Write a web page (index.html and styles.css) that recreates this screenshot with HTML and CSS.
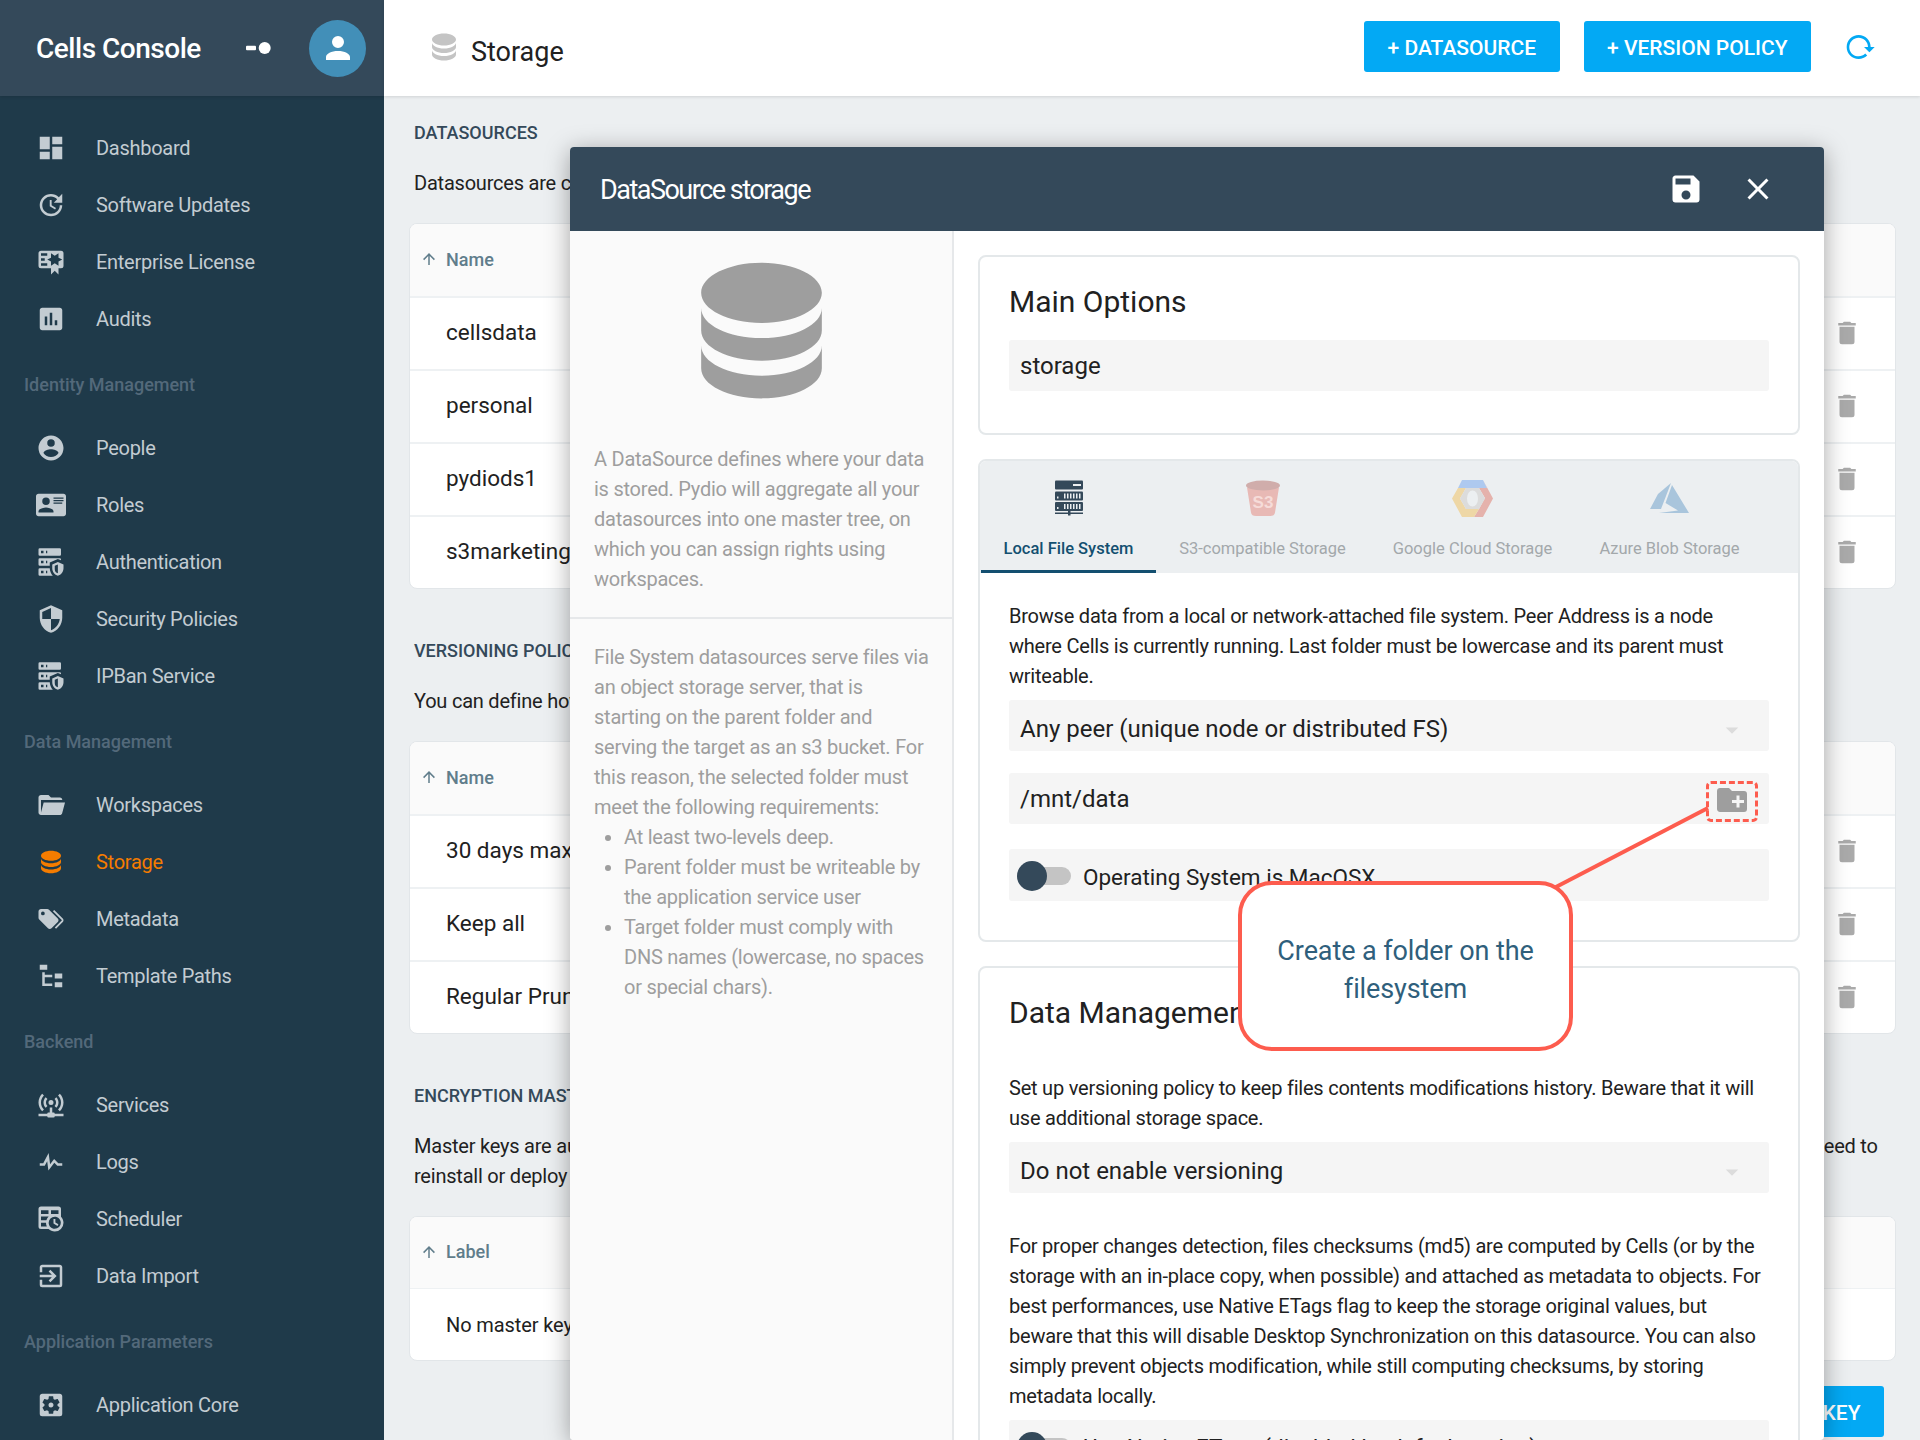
FILE: index.html
```html
<!DOCTYPE html>
<html lang="en">
<head>
<meta charset="utf-8">
<title>Cells Console - Storage</title>
<link rel="stylesheet" href="styles.css">
</head>
<body>
<svg class="sprite" xmlns="http://www.w3.org/2000/svg">
  <symbol id="i-dashboard" viewBox="0 0 24 24"><path d="M13,3V9H21V3M13,21H21V11H13M3,21H11V15H3M3,13H11V3H3V13Z"/></symbol>
  <symbol id="i-update" viewBox="0 0 24 24"><path d="M21,10.12H14.22L16.96,7.3C14.23,4.6 9.81,4.5 7.08,7.2C4.35,9.91 4.35,14.28 7.08,17C9.81,19.7 14.23,19.7 16.96,17C18.32,15.65 19,14.08 19,12.1H21C21,14.08 20.12,16.65 18.36,18.39C14.85,21.87 9.15,21.87 5.64,18.39C2.14,14.92 2.11,9.28 5.62,5.81C9.13,2.34 14.76,2.34 18.27,5.81L21,3V10.12M12.5,8V12.25L16,14.33L15.28,15.54L11,13V8H12.5Z"/></symbol>
  <symbol id="i-cert" viewBox="0 0 24 24"><path d="M4,3C2.89,3 2,3.89 2,5V15A2,2 0 0,0 4,17H12V22L15,19L18,22V17H20A2,2 0 0,0 22,15V8L22,6V5A2,2 0 0,0 20,3H16V3H4M12,5L15,7L18,5V8.5L21,10L18,11.5V15L15,13L12,15V11.5L9,10L12,8.5V5M4,5H9V7H4V5M4,9H7V11H4V9M4,13H9V15H4V13Z"/></symbol>
  <symbol id="i-chart" viewBox="0 0 24 24"><path d="M19,3H5C3.9,3 3,3.9 3,5V19C3,20.1 3.9,21 5,21H19C20.1,21 21,20.1 21,19V5C21,3.9 20.1,3 19,3M9,17H7V10H9V17M13,17H11V7H13V17M17,17H15V13H17V17Z"/></symbol>
  <symbol id="i-people" viewBox="0 0 24 24"><path d="M12,19.2C9.5,19.2 7.29,17.92 6,16C6.03,14 10,12.9 12,12.9C14,12.9 17.97,14 18,16C16.71,17.92 14.5,19.2 12,19.2M12,5A3,3 0 0,1 15,8A3,3 0 0,1 12,11A3,3 0 0,1 9,8A3,3 0 0,1 12,5M12,2A10,10 0 0,0 2,12A10,10 0 0,0 12,22A10,10 0 0,0 22,12C22,6.47 17.5,2 12,2Z"/></symbol>
  <symbol id="i-roles" viewBox="0 0 24 24"><path d="M2,3H22C23.05,3 24,3.95 24,5V19C24,20.05 23.05,21 22,21H2C0.95,21 0,20.05 0,19V5C0,3.95 0.95,3 2,3M14,6V7H22V6H14M14,8V9H21.5L22,9V8H14M14,10V11H21V10H14M8,13.91C6,13.91 2,15 2,17V18H14V17C14,15 10,13.91 8,13.91M8,6A3,3 0 0,0 5,9A3,3 0 0,0 8,12A3,3 0 0,0 11,9A3,3 0 0,0 8,6Z"/></symbol>
  <symbol id="i-server-sec" viewBox="0 0 24 24"><path d="M3,1H19A1,1 0 0,1 20,2V6A1,1 0 0,1 19,7H3A1,1 0 0,1 2,6V2A1,1 0 0,1 3,1M3,9H19A1,1 0 0,1 20,10V10.67L17.5,9.56L11,12.44V15H3A1,1 0 0,1 2,14V10A1,1 0 0,1 3,9M3,17H11C11.06,19.25 12,21.4 13.46,23H3A1,1 0 0,1 2,22V18A1,1 0 0,1 3,17M8,5H9V3H8V5M8,13H9V11H8V13M8,21H9V19H8V21M4,3V5H6V3H4M4,11V13H6V11H4M4,19V21H6V19H4M17.5,12L22,14V17C22,19.78 20.08,22.37 17.5,23C14.92,22.37 13,19.78 13,17V14L17.5,12M17.5,13.94L15,15.06V17.72C15,19.26 16.07,20.7 17.5,21.06V13.94Z"/></symbol>
  <symbol id="i-shield" viewBox="0 0 24 24"><path d="M12,12H19C18.47,16.11 15.72,19.78 12,20.92V12H5V6.3L12,3.19M12,1L3,5V11C3,16.55 6.84,21.73 12,23C17.16,21.73 21,16.55 21,11V5L12,1Z"/></symbol>
  <symbol id="i-folder" viewBox="0 0 24 24"><path d="M19,20H4C2.89,20 2,19.1 2,18V6C2,4.89 2.89,4 4,4H10L12,6H19A2,2 0 0,1 21,8H21L4,8V18L6.14,10H23.21L20.93,18.5C20.7,19.37 19.92,20 19,20Z"/></symbol>
  <symbol id="i-db" viewBox="0 0 24 24"><path d="M12,3C7.58,3 4,4.79 4,7C4,9.21 7.58,11 12,11C16.42,11 20,9.21 20,7C20,4.79 16.42,3 12,3M4,9V12C4,14.21 7.58,16 12,16C16.42,16 20,14.21 20,12V9C20,11.21 16.42,13 12,13C7.58,13 4,11.21 4,9M4,14V17C4,19.21 7.58,21 12,21C16.42,21 20,19.21 20,17V14C20,16.21 16.42,18 12,18C7.58,18 4,16.21 4,14Z"/></symbol>
  <symbol id="i-tags" viewBox="0 0 24 24"><path d="M5.5,9A1.5,1.5 0 0,0 7,7.5A1.5,1.5 0 0,0 5.5,6A1.5,1.5 0 0,0 4,7.5A1.5,1.5 0 0,0 5.5,9M17.41,11.58C17.77,11.94 18,12.44 18,13C18,13.55 17.78,14.05 17.41,14.41L12.41,19.41C12.05,19.77 11.55,20 11,20C10.45,20 9.95,19.78 9.58,19.41L2.59,12.42C2.22,12.05 2,11.55 2,11V6C2,4.89 2.89,4 4,4H9C9.55,4 10.05,4.22 10.41,4.58L17.41,11.58M13.54,5.71L14.54,4.71L21.41,11.58C21.78,11.94 22,12.45 22,13C22,13.55 21.78,14.05 21.42,14.41L16.04,19.79L15.04,18.79L20.75,13L13.54,5.71Z"/></symbol>
  <symbol id="i-tree" viewBox="0 0 24 24"><path d="M3,3H9V7H3V3M15,10H21V14H15V10M15,17H21V21H15V17M13,13H7V18H13V20H7L5,20V9H7V11H13V13Z"/></symbol>
  <symbol id="i-network" viewBox="0 0 24 24"><path d="M4.93,2.93C3.12,4.74 2,7.24 2,10C2,12.76 3.12,15.26 4.93,17.07L6.34,15.66C4.89,14.22 4,12.22 4,10C4,7.79 4.89,5.78 6.34,4.34L4.93,2.93M19.07,2.93L17.66,4.34C19.11,5.78 20,7.79 20,10C20,12.22 19.11,14.22 17.66,15.66L19.07,17.07C20.88,15.26 22,12.76 22,10C22,7.24 20.88,4.74 19.07,2.93M7.76,5.76C6.67,6.85 6,8.35 6,10C6,11.65 6.67,13.15 7.76,14.24L9.17,12.83C8.45,12.11 8,11.11 8,10C8,8.89 8.45,7.89 9.17,7.17L7.76,5.76M16.24,5.76L14.83,7.17C15.55,7.89 16,8.89 16,10C16,11.11 15.55,12.11 14.83,12.83L16.24,14.24C17.33,13.15 18,11.65 18,10C18,8.35 17.33,6.85 16.24,5.76M12,8A2,2 0 0,0 10,10A2,2 0 0,0 12,12A2,2 0 0,0 14,10A2,2 0 0,0 12,8M11,14V18H10A1,1 0 0,0 9,19H2V21H9A1,1 0 0,0 10,22H14A1,1 0 0,0 15,21H22V19H15A1,1 0 0,0 14,18H13V14H11Z"/></symbol>
  <symbol id="i-pulse" viewBox="0 0 24 24"><path d="M3,13H5.79L10.1,4.79L11.28,13.75L14.5,9.66L17.83,13H21V15H17L14.67,12.67L9.92,18.73L8.94,11.31L7,15H3V13Z"/></symbol>
  <symbol id="i-timetable" viewBox="0 0 24 24"><path d="M14,12H15.5V14.82L17.94,16.23L17.19,17.53L14,15.69V12M4,2H18A2,2 0 0,1 20,4V10.1C21.24,11.36 22,13.09 22,15A7,7 0 0,1 15,22C13.09,22 11.36,21.24 10.1,20H4A2,2 0 0,1 2,18V4A2,2 0 0,1 4,2M4,15V18H8.67C8.24,17.09 8,16.07 8,15H4M4,8H10V5H4V8M18,8V5H12V8H18M4,13H8.29C8.63,11.85 9.26,10.82 10.1,10H4V13M15,10.15A4.85,4.85 0 0,0 10.15,15C10.15,17.68 12.32,19.85 15,19.85A4.85,4.85 0 0,0 19.85,15C19.85,12.32 17.68,10.15 15,10.15Z"/></symbol>
  <symbol id="i-import" viewBox="0 0 24 24"><path d="M10.09,15.59L11.5,17L16.5,12L11.5,7L10.09,8.41L12.67,11H3V13H12.67L10.09,15.59M19,3H5C3.89,3 3,3.9 3,5V9H5V5H19V19H5V15H3V19A2,2 0 0,0 5,21H19A2,2 0 0,0 21,19V5C21,3.9 20.1,3 19,3Z"/></symbol>
  <symbol id="i-settings" viewBox="0 0 24 24"><path d="M17.25,12C17.25,12.23 17.23,12.46 17.2,12.68L18.68,13.84C18.81,13.95 18.85,14.13 18.76,14.29L17.36,16.71C17.27,16.86 17.09,16.92 16.93,16.86L15.19,16.16C14.83,16.44 14.43,16.67 14,16.85L13.75,18.7C13.72,18.87 13.57,19 13.4,19H10.6C10.43,19 10.28,18.87 10.25,18.7L10,16.85C9.56,16.67 9.17,16.44 8.81,16.16L7.07,16.86C6.91,16.92 6.73,16.86 6.64,16.71L5.24,14.29C5.15,14.13 5.19,13.95 5.32,13.84L6.8,12.68C6.77,12.46 6.75,12.23 6.75,12C6.75,11.77 6.77,11.54 6.8,11.32L5.32,10.16C5.19,10.05 5.15,9.86 5.24,9.71L6.64,7.29C6.73,7.13 6.91,7.07 7.07,7.13L8.81,7.84C9.17,7.56 9.56,7.32 10,7.15L10.25,5.29C10.28,5.13 10.43,5 10.6,5H13.4C13.57,5 13.72,5.13 13.75,5.29L14,7.15C14.43,7.32 14.83,7.56 15.19,7.84L16.93,7.13C17.09,7.07 17.27,7.13 17.36,7.29L18.76,9.71C18.85,9.86 18.81,10.05 18.68,10.16L17.2,11.32C17.23,11.54 17.25,11.77 17.25,12M19,3H5C3.89,3 3,3.89 3,5V19A2,2 0 0,0 5,21H19A2,2 0 0,0 21,19V5C21,3.89 20.1,3 19,3M12,10C10.89,10 10,10.89 10,12A2,2 0 0,0 12,14C13.1,14 14,13.1 14,12C14,10.89 13.1,10 12,10Z"/></symbol>
  <symbol id="i-account" viewBox="0 0 24 24"><path d="M12,4A4,4 0 0,1 16,8A4,4 0 0,1 12,12A4,4 0 0,1 8,8A4,4 0 0,1 12,4M12,14C16.42,14 20,15.79 20,18V20H4V18C4,15.79 7.58,14 12,14Z"/></symbol>
  <symbol id="i-save" viewBox="0 0 24 24"><path d="M15,9H5V5H15M12,19A3,3 0 0,1 9,16A3,3 0 0,1 12,13A3,3 0 0,1 15,16A3,3 0 0,1 12,19M17,3H5C3.89,3 3,3.9 3,5V19A2,2 0 0,0 5,21H19A2,2 0 0,0 21,19V7L17,3Z"/></symbol>
  <symbol id="i-close" viewBox="0 0 24 24"><path d="M19,6.41L17.59,5L12,10.59L6.41,5L5,6.41L10.59,12L5,17.59L6.41,19L12,13.41L17.59,19L19,17.59L13.41,12L19,6.41Z"/></symbol>
  <symbol id="i-trash" viewBox="0 0 24 24"><path d="M19,4H15.5L14.5,3H9.5L8.5,4H5V6H19M6,19A2,2 0 0,0 8,21H16A2,2 0 0,0 18,19V7H6V19Z"/></symbol>
  <symbol id="i-reload" viewBox="0 0 24 24"><path d="M2 12C2 16.97 6.03 21 11 21C13.39 21 15.68 20.06 17.4 18.4L15.9 16.9C14.63 18.25 12.86 19 11 19C4.76 19 1.64 11.46 6.05 7.05C10.46 2.64 18 5.77 18 12H15L19 16H19.1L23 12H20C20 7.03 15.97 3 11 3C6.03 3 2 7.03 2 12Z"/></symbol>
  <symbol id="i-folder-plus" viewBox="0 0 24 24"><path d="M10,4L12,6H20A2,2 0 0,1 22,8V18A2,2 0 0,1 20,20H4C2.89,20 2,19.1 2,18V6C2,4.89 2.89,4 4,4H10M15,9V12H12V14H15V17H17V14H20V12H17V9H15Z"/></symbol>
  <symbol id="i-up" viewBox="0 0 24 24"><path d="M13,20H11V8L5.5,13.5L4.08,12.08L12,4.16L19.92,12.08L18.5,13.5L13,8V20Z"/></symbol>
  <symbol id="i-down" viewBox="0 0 24 24"><path d="M7,10L12,15L17,10H7Z"/></symbol>
</svg>

<div class="app">
  <aside class="sidebar">
    <header class="brand">
      <span class="brand-title">Cells Console</span>
      <svg class="brand-toggle" viewBox="0 0 25 12"><rect x="0" y="3.7" width="10" height="4.6" rx="1"/><circle cx="18.7" cy="6" r="6"/></svg>
      <span class="avatar"><svg class="icon-avatar"><use href="#i-account"/></svg></span>
    </header>
    <nav class="nav">
      <a class="nav-item"><svg class="nav-icon"><use href="#i-dashboard"/></svg>Dashboard</a>
      <a class="nav-item"><svg class="nav-icon"><use href="#i-update"/></svg>Software Updates</a>
      <a class="nav-item"><svg class="nav-icon"><use href="#i-cert"/></svg>Enterprise License</a>
      <a class="nav-item"><svg class="nav-icon"><use href="#i-chart"/></svg>Audits</a>
      <div class="nav-group">Identity Management</div>
      <a class="nav-item"><svg class="nav-icon"><use href="#i-people"/></svg>People</a>
      <a class="nav-item"><svg class="nav-icon"><use href="#i-roles"/></svg>Roles</a>
      <a class="nav-item"><svg class="nav-icon"><use href="#i-server-sec"/></svg>Authentication</a>
      <a class="nav-item"><svg class="nav-icon"><use href="#i-shield"/></svg>Security Policies</a>
      <a class="nav-item"><svg class="nav-icon"><use href="#i-server-sec"/></svg>IPBan Service</a>
      <div class="nav-group">Data Management</div>
      <a class="nav-item"><svg class="nav-icon"><use href="#i-folder"/></svg>Workspaces</a>
      <a class="nav-item is-active"><svg class="nav-icon"><use href="#i-db"/></svg>Storage</a>
      <a class="nav-item"><svg class="nav-icon"><use href="#i-tags"/></svg>Metadata</a>
      <a class="nav-item"><svg class="nav-icon"><use href="#i-tree"/></svg>Template Paths</a>
      <div class="nav-group">Backend</div>
      <a class="nav-item"><svg class="nav-icon"><use href="#i-network"/></svg>Services</a>
      <a class="nav-item"><svg class="nav-icon"><use href="#i-pulse"/></svg>Logs</a>
      <a class="nav-item"><svg class="nav-icon"><use href="#i-timetable"/></svg>Scheduler</a>
      <a class="nav-item"><svg class="nav-icon"><use href="#i-import"/></svg>Data Import</a>
      <div class="nav-group">Application Parameters</div>
      <a class="nav-item"><svg class="nav-icon"><use href="#i-settings"/></svg>Application Core</a>
    </nav>
  </aside>

  <main class="main">
    <header class="topbar">
      <svg class="top-icon"><use href="#i-db"/></svg>
      <h1 class="top-title">Storage</h1>
      <button class="btn">+ DATASOURCE</button>
      <button class="btn">+ VERSION POLICY</button>
      <svg class="top-reload"><use href="#i-reload"/></svg>
    </header>

    <div class="content">
      <section class="section">
        <h2 class="section-title">Datasources</h2>
        <p class="section-text">Datasources are configured to store your data on a local folder or a remote object storage.</p>
        <div class="card">
          <div class="card-head"><svg class="sort"><use href="#i-up"/></svg>Name</div>
          <div class="card-row">cellsdata<svg class="trash"><use href="#i-trash"/></svg></div>
          <div class="card-row">personal<svg class="trash"><use href="#i-trash"/></svg></div>
          <div class="card-row">pydiods1<svg class="trash"><use href="#i-trash"/></svg></div>
          <div class="card-row">s3marketing<svg class="trash"><use href="#i-trash"/></svg></div>
        </div>
      </section>

      <section class="section">
        <h2 class="section-title">Versioning Policies</h2>
        <p class="section-text">You can define how many versions of each file are kept on a datasource.</p>
        <div class="card">
          <div class="card-head"><svg class="sort"><use href="#i-up"/></svg>Name</div>
          <div class="card-row">30 days max<svg class="trash"><use href="#i-trash"/></svg></div>
          <div class="card-row">Keep all<svg class="trash"><use href="#i-trash"/></svg></div>
          <div class="card-row">Regular Pruning<svg class="trash"><use href="#i-trash"/></svg></div>
        </div>
      </section>

      <section class="section">
        <h2 class="section-title">Encryption Master Keys</h2>
        <p class="section-text section-text-wide">Master keys are automatically created and stored inside the application keyring. Export them and keep them in a very safe and very secure place, because you will need to<br>reinstall or deploy them on any other instance of the application.</p>
        <div class="card card-compact">
          <div class="card-head"><svg class="sort"><use href="#i-up"/></svg>Label</div>
          <div class="card-row">No master key</div>
        </div>
        <div class="section-actions"><button class="btn">+ MASTER KEY</button></div>
      </section>
    </div>
  </main>
</div>

<div class="modal">
  <header class="modal-head">
    <span class="modal-title">DataSource storage</span>
    <svg class="modal-action"><use href="#i-save"/></svg>
    <svg class="modal-action modal-close"><use href="#i-close"/></svg>
  </header>
  <div class="modal-body">
    <aside class="info">
      <div class="info-top">
        <svg class="info-icon"><use href="#i-db"/></svg>
        <p class="info-text">A DataSource defines where your data is stored. Pydio will aggregate all your datasources into one master tree, on which you can assign rights using workspaces.</p>
      </div>
      <div class="info-bottom">
        <p class="info-text">File System datasources serve files via an object storage server, that is starting on the parent folder and serving the target as an s3 bucket. For this reason, the selected folder must meet the following requirements:</p>
        <ul class="info-list">
          <li>At least two-levels deep.</li>
          <li>Parent folder must be writeable by the application service user</li>
          <li>Target folder must comply with DNS names (lowercase, no spaces or special chars).</li>
        </ul>
      </div>
    </aside>

    <div class="forms">
      <section class="panel panel-main">
        <h3 class="panel-title">Main Options</h3>
        <div class="field">storage</div>
      </section>

      <section class="panel panel-storage">
        <div class="tabs">
          <div class="tab is-active">
            <svg class="tab-icon" width="28" height="36" viewBox="0 0 28 36">
              <g fill="#34495a">
                <rect x="0" y="0" width="28" height="9" rx="1"/><rect x="0" y="11" width="28" height="9" rx="1"/><rect x="0" y="21.500" width="28" height="9" rx="1"/>
                <rect x="13" y="30" width="2.500" height="5"/><rect x="0" y="32" width="28" height="1.500"/>
              </g>
              <g fill="#eceff1">
                <rect x="18" y="3.500" width="8" height="2"/>
                <rect x="2" y="16" width="1.500" height="2"/><rect x="9" y="13" width="1.500" height="5"/><rect x="12" y="13" width="1.500" height="5"/><rect x="15" y="13" width="1.500" height="5"/><rect x="18" y="13" width="1.500" height="5"/><rect x="21" y="13" width="1.500" height="5"/><rect x="24" y="13" width="1.500" height="5"/>
                <rect x="2" y="26.500" width="1.500" height="2"/><rect x="9" y="23.500" width="1.500" height="5"/><rect x="12" y="23.500" width="1.500" height="5"/><rect x="15" y="23.500" width="1.500" height="5"/><rect x="18" y="23.500" width="1.500" height="5"/><rect x="21" y="23.500" width="1.500" height="5"/><rect x="24" y="23.500" width="1.500" height="5"/>
              </g>
            </svg>
            <span class="tab-label">Local File System</span>
          </div>
          <div class="tab">
            <svg class="tab-icon" width="34" height="36" viewBox="0 0 34 36">
              <path d="M1 7 L5 32 Q5.500 35.500 10 35.500 H24 Q28.500 35.500 29 32 L33 7 Z" fill="#e8b9b5"/>
              <ellipse cx="17" cy="5" rx="17" ry="5" fill="#d0adab"/>
              <text class="s3-text" x="17" y="27" text-anchor="middle">S3</text>
            </svg>
            <span class="tab-label">S3-compatible Storage</span>
          </div>
          <div class="tab">
            <svg class="tab-icon" width="41" height="37" viewBox="0 0 41 37">
              <polygon points="10,0 31,0 35,8 27,8 14,8 6,8" fill="#aec9ef"/>
              <polygon points="31,0 41,18.500 31,37 22,37 27,29 33,18 27,8 35,8" fill="#e5b2ac"/>
              <polygon points="0,18.500 6,8 9,8 14,8 8,18.500 14,29 22,29 27,29 22,37 10,37" fill="#eed7a6"/>
              <polygon points="14,8 27,8 33,18.500 27,29 14,29 8,18.500" fill="#dcdcdc"/>
              <ellipse cx="20.500" cy="18.500" rx="5.500" ry="8" fill="#eceff1"/>
            </svg>
            <span class="tab-label">Google Cloud Storage</span>
          </div>
          <div class="tab">
            <svg class="tab-icon" width="39" height="31" viewBox="0 0 39 31">
              <path d="M21 0 L8 11 L0 26 H11 Z" fill="#a9c5dc"/>
              <path d="M22 2 L15.500 20 L28 27.500 L9 30 H39 Z" fill="#a9c5dc"/>
            </svg>
            <span class="tab-label">Azure Blob Storage</span>
          </div>
        </div>
        <div class="panel-inner">
          <p class="panel-text panel-text-storage">Browse data from a local or network-attached file system. Peer Address is a node where Cells is currently running. Last folder must be lowercase and its parent must writeable.</p>
          <div class="field field-select">Any peer (unique node or distributed FS)<svg class="caret"><use href="#i-down"/></svg></div>
          <div class="field field-path">/mnt/data<svg class="folder-plus"><use href="#i-folder-plus"/></svg></div>
          <div class="field field-toggle"><span class="toggle"><span class="toggle-thumb"></span></span><span class="toggle-label">Operating System is MacOSX</span></div>
        </div>
      </section>

      <section class="panel panel-data">
        <h3 class="panel-title">Data Management</h3>
        <p class="panel-text panel-text-data">Set up versioning policy to keep files contents modifications history. Beware that it will use additional storage space.</p>
        <div class="field field-select">Do not enable versioning<svg class="caret"><use href="#i-down"/></svg></div>
        <p class="panel-text panel-text-etag">For proper changes detection, files checksums (md5) are computed by Cells (or by the storage with an in-place copy, when possible) and attached as metadata to objects. For best performances, use Native ETags flag to keep the storage original values, but beware that this will disable Desktop Synchronization on this datasource. You can also simply prevent objects modification, while still computing checksums, by storing metadata locally.</p>
        <div class="field field-toggle field-toggle-last"><span class="toggle"><span class="toggle-thumb"></span></span><span class="toggle-label">Use Native ETags (disabled by default option)</span></div>
      </section>
    </div>
  </div>
</div>

<svg class="callout-line" viewBox="0 0 160 90"><line x1="156" y1="4" x2="2" y2="84"/></svg>
<div class="callout-target"></div>
<div class="callout">Create a folder on the filesystem</div>
</body>
</html>
```

FILE: styles.css
```css
* { box-sizing: border-box; }
html, body { margin: 0; padding: 0; height: 1440px; overflow: hidden; }
body { font-family: Roboto, "Noto Sans", sans-serif; color: #212121; background: #eceff1; position: relative; }
h1, h2, h3, p, ul { margin: 0; padding: 0; font-weight: 400; }
.sprite { position: absolute; width: 0; height: 0; }
svg { fill: currentColor; display: block; flex: none; }

.app { display: flex; height: 1440px; }

/* Sidebar */
.sidebar { width: 384px; flex: none; background: #1f3a4a; color: #c3ccd2; height: 1440px; overflow: hidden; }
.brand { height: 96px; background: #34495a; display: flex; align-items: center; padding: 0 18px 0 36px; box-shadow: 0 1px 3px rgba(0,0,0,.12); }
.brand-title { font-size: 28px; font-weight: 500; color: #fff; letter-spacing: -.48px; }
.brand-toggle { width: 25px; height: 12px; fill: #fff; margin-left: auto; margin-right: 38px; }
.avatar { width: 57px; height: 57px; border-radius: 50%; background: #428fb8; display: flex; align-items: center; justify-content: center; color: #fff; }
.icon-avatar { width: 36px; height: 36px; }
.nav { padding-top: 23.500px; }
.nav-item { display: flex; align-items: center; height: 57px; font-size: 20px; letter-spacing: -.28px; padding-left: 36px; }
.nav-icon { width: 30px; height: 30px; margin-right: 30px; }
.nav-item.is-active { color: #f57c00; }
.nav-group { height: 72px; padding: 24px 0 0 24px; font-size: 18px; font-weight: 500; line-height: 25px; color: #53697a; }

/* Main */
.main { flex: 1; min-width: 0; display: flex; flex-direction: column; background: #eceff1; }
.topbar { height: 96px; flex: none; background: #fff; display: flex; align-items: center; padding: 0 44px 3px 42px; box-shadow: 0 1px 3px rgba(0,0,0,.12); position: relative; }
.top-icon { width: 36px; height: 36px; color: #c4c4c4; margin-top: 1px; }
.top-title { font-size: 27px; margin: 10px auto 0 9px; color: #212121; }
.btn { height: 51px; padding: 2px 23.500px 0; border: 0; border-radius: 3px; background: #03a9f4; color: #fff; font: 500 21px Roboto, sans-serif; margin-right: 24px; white-space: nowrap; }
.top-reload { width: 32px; height: 32px; color: #03a9f4; margin-left: 9px; }

.content { padding: 24px 24px 0 25px; }
.section { margin-bottom: 49px; }
.section-title { font-size: 18px; font-weight: 500; line-height: 26px; color: #34495a; text-transform: uppercase; padding-left: 5px; }
.section-text { font-size: 20px; line-height: 30px; letter-spacing: -.22px; margin-top: 22px; padding-left: 5px; color: #212121; }
.section-text-wide { white-space: nowrap; }
.card { margin-top: 25px; background: #fff; border: 1px solid #e2e6e9; border-radius: 8px; overflow: hidden; }
.card-head { height: 72px; display: flex; align-items: center; background: #fafafa; font-size: 18px; font-weight: 500; color: #607d8b; padding: 0 0 2px 10px; }
.sort { width: 18px; height: 18px; margin-right: 8px; }
.card-row { height: 73px; display: flex; align-items: center; justify-content: space-between; font-size: 22.500px; padding: 0 33px 3px 36px; border-top: 2px solid #eef1f3; }
.card-compact .card-head { height: 71px; }
.card-compact .card-row { height: 72px; border-top-width: 1px; font-size: 20px; letter-spacing: -.1px; padding-bottom: 0; }
.trash { width: 30px; height: 30px; color: #aaa; margin-top: 1px; }
.section-actions { display: flex; justify-content: flex-end; margin-top: 25px; padding-right: 12px; }
.section-actions .btn { margin-right: 0; }

/* Modal */
.modal { position: absolute; left: 570px; top: 147px; width: 1254px; height: 1293px; background: #fff; border-radius: 4px; overflow: hidden; box-shadow: 0 4px 24px rgba(0,0,0,.35); display: flex; flex-direction: column; }
.modal-head { height: 84px; flex: none; background: #34495a; color: #fff; display: flex; align-items: center; padding: 0 48px 0 30px; }
.modal-title { font-size: 27px; letter-spacing: -1.5px; margin: 2px auto 0 0; }
.modal-action { width: 36px; height: 36px; }
.modal-close { margin-left: 36px; }
.modal-body { flex: 1; display: flex; min-height: 0; }
.info { width: 384px; flex: none; background: #fafafa; border-right: 2px solid #e6e8ea; color: #9e9e9e; }
.info-top { padding: 9px 22px 23px 24px; border-bottom: 2px solid #e6e8ea; }
.info-icon { width: 181px; height: 181px; margin: 0 0 23px 76.500px; color: #9e9e9e; }
.info-text { font-size: 20px; line-height: 30px; letter-spacing: -.24px; }
.info-bottom { padding: 23px 18px 0 24px; }
.info-list { font-size: 20px; line-height: 30px; letter-spacing: -.24px; padding-left: 30px; }

.forms { flex: 1; min-width: 0; padding: 24px 24px 0 24px; }
.panel { border: 2px solid #e4e8ea; border-radius: 8px; margin-bottom: 24px; background: #fff; }
.panel-main { height: 180px; padding: 0 29px; }
.panel-title { font-size: 30px; line-height: 40px; color: #212121; }
.panel-main .panel-title { padding-top: 25px; height: 83px; }
.panel-text { font-size: 20px; line-height: 30px; letter-spacing: -.22px; color: #212121; }
.field { position: relative; height: 51px; background: #f5f5f5; border-radius: 3px; padding: 1px 11px 0; font-size: 24px; display: flex; align-items: center; color: #212121; }
.field-select { padding-top: 6px; }
.panel-storage { height: 483px; overflow: hidden; }
.tabs { display: flex; background: #eceff1; height: 112px; padding-left: 1px; }
.tab { height: 112px; padding: 18.500px 23px 0; display: flex; flex-direction: column; align-items: center; border-bottom: 3px solid transparent; white-space: nowrap; color: #a3a8ab; }
.tab.is-active { border-bottom-color: #134f70; color: #134f70; font-weight: 500; }
.tab-icon { height: 37px; }
.tab-label { font-size: 16.500px; line-height: 22px; position: absolute; margin-top: 58px; }
.tab:nth-child(1) { width: 175px; }
.tab:nth-child(2) { width: 213px; }
.tab:nth-child(3) { width: 207px; }
.tab:nth-child(4) { width: 187px; }
.s3-text { font: 700 17px "Liberation Sans", sans-serif; fill: #f6dcd9; }
.panel-inner { padding: 28px 29px 0; }
.panel-text-storage { margin-bottom: 9px; }
.field-path { margin-top: 22px; }
.field-toggle { margin-top: 25px; height: 52px; padding-left: 8px; }
.toggle { position: relative; width: 54px; height: 18px; border-radius: 9px; background: #c4c4c4; flex: none; }
.toggle-thumb { position: absolute; left: 0; top: -6px; width: 30px; height: 30px; border-radius: 50%; background: #34495a; }
.toggle-label { margin: 2px 0 0 12px; font-size: 22.500px; }
.caret { position: absolute; right: 22px; top: 15px; width: 30px; height: 30px; color: #dcdcdc; }
.folder-plus { position: absolute; right: 19px; top: 9px; width: 36px; height: 36px; color: #9e9e9e; }
.panel-data { padding: 0 29px; height: 600px; }
.panel-data .panel-title { padding-top: 25px; height: 105px; }
.panel-text-data { margin-bottom: 9px; }
.panel-text-etag { margin-top: 38px; }
.field-toggle-last { margin-top: 9px; height: 60px; align-items: flex-start; padding-top: 12px; }
.field-toggle-last .toggle { margin-top: 6px; }

/* Callout overlay */
.callout { position: absolute; left: 1238px; top: 881px; width: 335px; height: 170px; background: #fff; border: 4px solid #fd5c4e; border-radius: 34px; display: flex; align-items: center; justify-content: center; text-align: center; padding: 7px 30px 0; font-size: 27px; letter-spacing: -.1px; line-height: 38px; color: #2f5f7c; }
.callout-target { position: absolute; left: 1706px; top: 781px; width: 52px; height: 41px; border: 3px dashed #fd5c4e; border-radius: 5px; }
.callout-line { position: absolute; left: 1552px; top: 804px; width: 160px; height: 90px; fill: none; }
.callout-line line { stroke: #fd5c4e; stroke-width: 4; }
```
